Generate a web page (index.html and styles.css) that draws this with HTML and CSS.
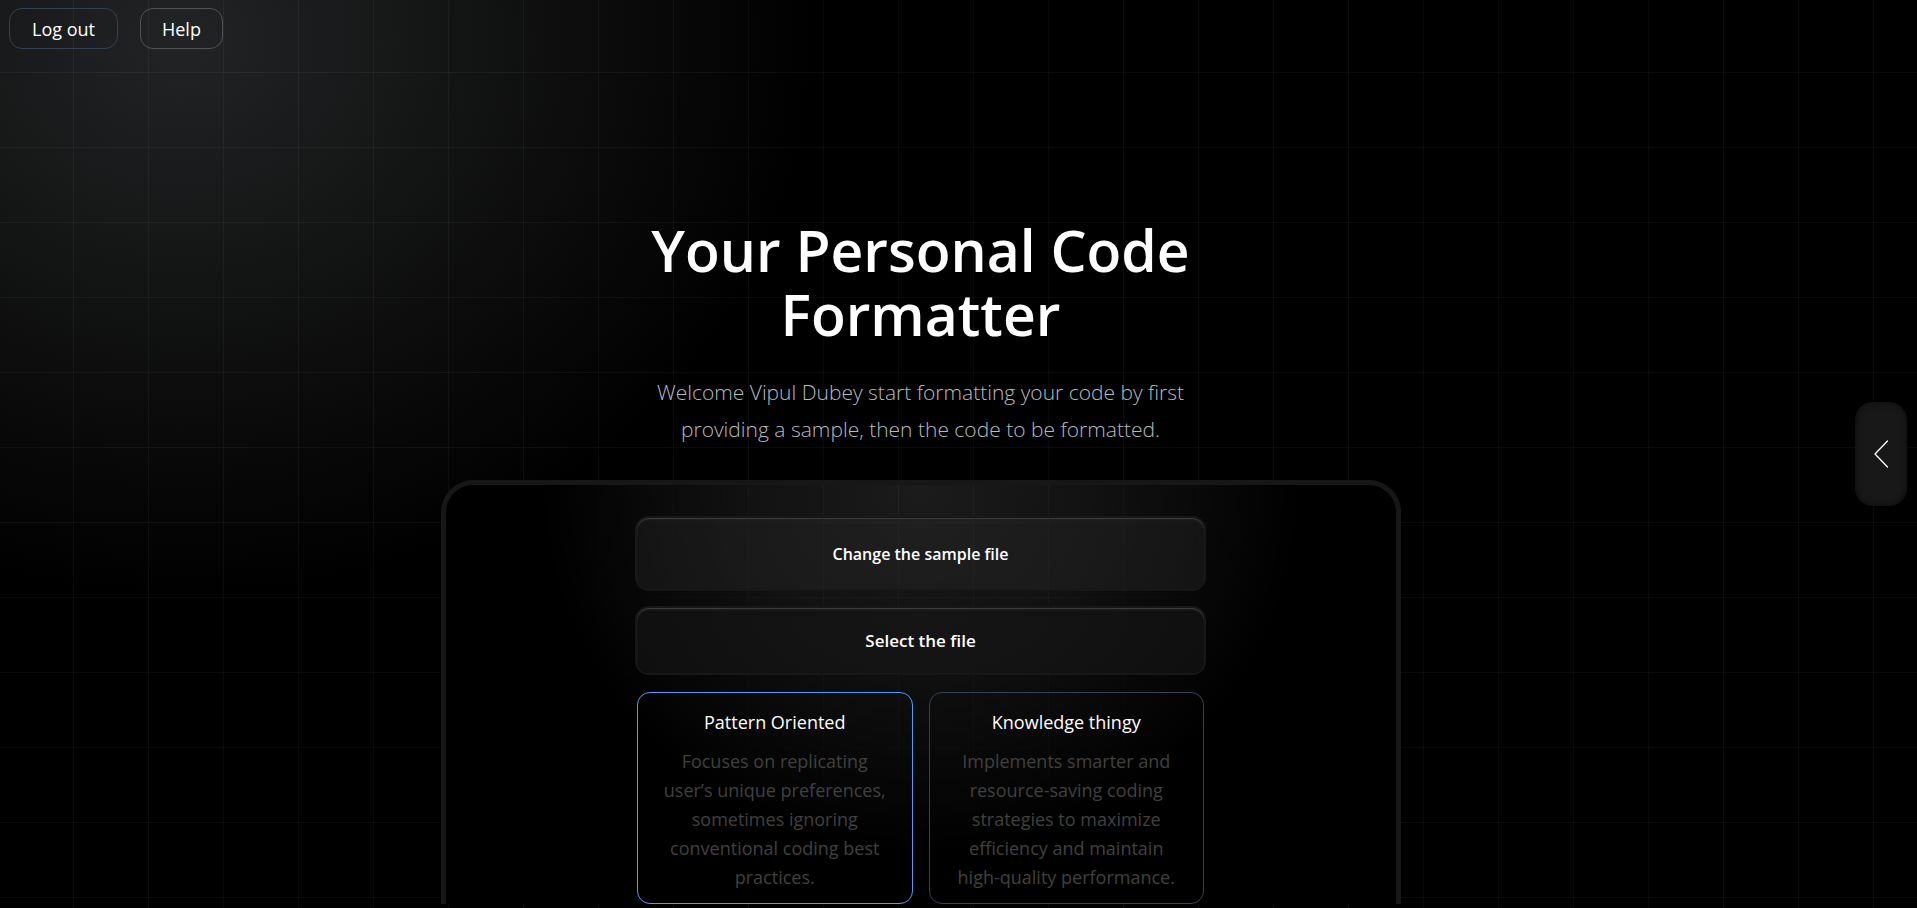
FILE: index.html
```
<!DOCTYPE html>
<html lang="en">
<head>
<meta charset="utf-8">
<title>Your Personal Code Formatter</title>
<link rel="stylesheet" href="styles.css">
</head>
<body>
<div class="page">
  <header class="topbar">
    <button class="pill pill-logout" type="button">Log out</button>
    <button class="pill pill-help" type="button">Help</button>
  </header>
  <main class="main">
    <section class="hero">
      <h1 class="title">Your Personal Code<br>Formatter</h1>
      <p class="lead">Welcome Vipul Dubey start formatting your code by first<br>providing a sample, then the code to be formatted.</p>
    </section>
    <section class="panel">
      <div class="stack">
        <button class="file file-sample" type="button">Change the sample file</button>
        <button class="file file-code" type="button">Select the file</button>
        <div class="modes">
          <button class="mode mode-active" type="button">
            <span class="mode-name">Pattern Oriented</span>
            <span class="mode-text">Focuses on replicating user’s unique preferences, sometimes ignoring conventional coding best practices.</span>
          </button>
          <button class="mode" type="button">
            <span class="mode-name">Knowledge thingy</span>
            <span class="mode-text">Implements smarter and resource-saving coding strategies to maximize efficiency and maintain high-quality performance.</span>
          </button>
        </div>
      </div>
    </section>
  </main>
  <aside class="side">
    <button class="drawer" type="button" aria-label="Open side panel">
      <svg class="chevron" viewBox="0 0 16 28" fill="none" stroke="currentColor" stroke-width="1.3" stroke-linecap="round" stroke-linejoin="round"><path d="M14.500 1 2 14 14.500 27"/></svg>
    </button>
  </aside>
</div>
</body>
</html>
```
FILE: styles.css
```
* {
  box-sizing: border-box;
}

body {
  margin: 0;
  background: #000;
  color: #fff;
  font-family: "Segoe UI", "Open Sans", "Noto Sans", sans-serif;
}

button {
  font: inherit;
  color: inherit;
  background: none;
  border: 0;
  padding: 0;
  cursor: pointer;
}

.page {
  min-height: 100vh;
  display: grid;
  grid-template-columns: 1fr 76px;
  position: relative;
  background:
    linear-gradient(to right, rgba(255, 255, 255, 0.04) 1px, transparent 1px) 73px 0 / 75px 75px,
    linear-gradient(to bottom, rgba(255, 255, 255, 0.04) 1px, transparent 1px) 0 72px / 75px 75px,
    radial-gradient(ellipse 640px 560px at 180px 40px, #222325 0%, #161717 35%, #0a0a0a 70%, #000 100%),
    #000;
}

.topbar {
  position: absolute;
  top: 8px;
  left: 9px;
  display: flex;
  gap: 22px;
}

.pill {
  height: 41px;
  padding: 0 21px;
  border: 1px solid #525252;
  border-radius: 13px;
  font-size: 18px;
  line-height: 24px;
}

.pill-logout {
  padding: 0 22px;
  border-color: #334155;
}

.main {
  display: flex;
  flex-direction: column;
  align-items: center;
  padding: 218px 0 4px;
}

.hero {
  text-align: center;
}

.title {
  margin: 0;
  font-size: 57px;
  line-height: 64px;
  font-weight: 600;
}

.lead {
  margin: 28px 0 0;
  color: #b4bac2;
  font-size: 21px;
  line-height: 37px;
  font-weight: 300;
}

.panel {
  flex: 1;
  width: 960px;
  max-width: 100%;
  margin-top: 32px;
  padding-top: 33px;
  display: flex;
  justify-content: center;
  border: 5px solid #171717;
  border-bottom: 0;
  border-radius: 32px 32px 0 0;
  background:
    radial-gradient(ellipse 380px 370px at 50% 0, transparent 0%, rgba(0, 0, 0, 0.35) 45%, #000 100%),
    linear-gradient(to right, rgba(255, 255, 255, 0.04) 1px, transparent 1px) 2px 0 / 75px 75px,
    linear-gradient(to bottom, rgba(255, 255, 255, 0.03) 1px, transparent 1px) 0 37px / 75px 75px,
    #1b1b1b;
}

.stack {
  width: 567px;
  display: flex;
  flex-direction: column;
  gap: 19px;
}

.file {
  border-radius: 12px;
  box-shadow: 0 0 0 2px #171717, inset 0 1px 0 #3a3a3a, inset 0 2px 2px #222;
  font-weight: 600;
}

.file-sample {
  height: 71px;
  background: rgba(40, 40, 40, 0.4);
  font-size: 16px;
}

.file-code {
  height: 65px;
  background: radial-gradient(ellipse 400px 200px at 50% 0, #161616, #0d0d0d);
  font-size: 17px;
}

.modes {
  display: grid;
  grid-template-columns: 1fr 1fr;
  gap: 16px;
}

.mode {
  display: flex;
  flex-direction: column;
  gap: 10px;
  padding: 15px 20px 11px;
  border: 1px solid #334155;
  border-radius: 13px;
  font-size: 18px;
  text-align: center;
}

.mode-active {
  border-color: #4f9cf9;
}

.mode-name {
  line-height: 29px;
}

.mode-text {
  color: #404040;
  line-height: 29px;
}

.side {
  display: flex;
  align-items: center;
  justify-content: flex-end;
  padding-right: 10px;
}

.drawer {
  width: 52px;
  height: 104px;
  display: grid;
  place-items: center;
  border-radius: 18px;
  background: #181818;
  box-shadow: inset 0 0 6px #0a0a0a;
}

.chevron {
  width: 16px;
  height: 28px;
}
```
